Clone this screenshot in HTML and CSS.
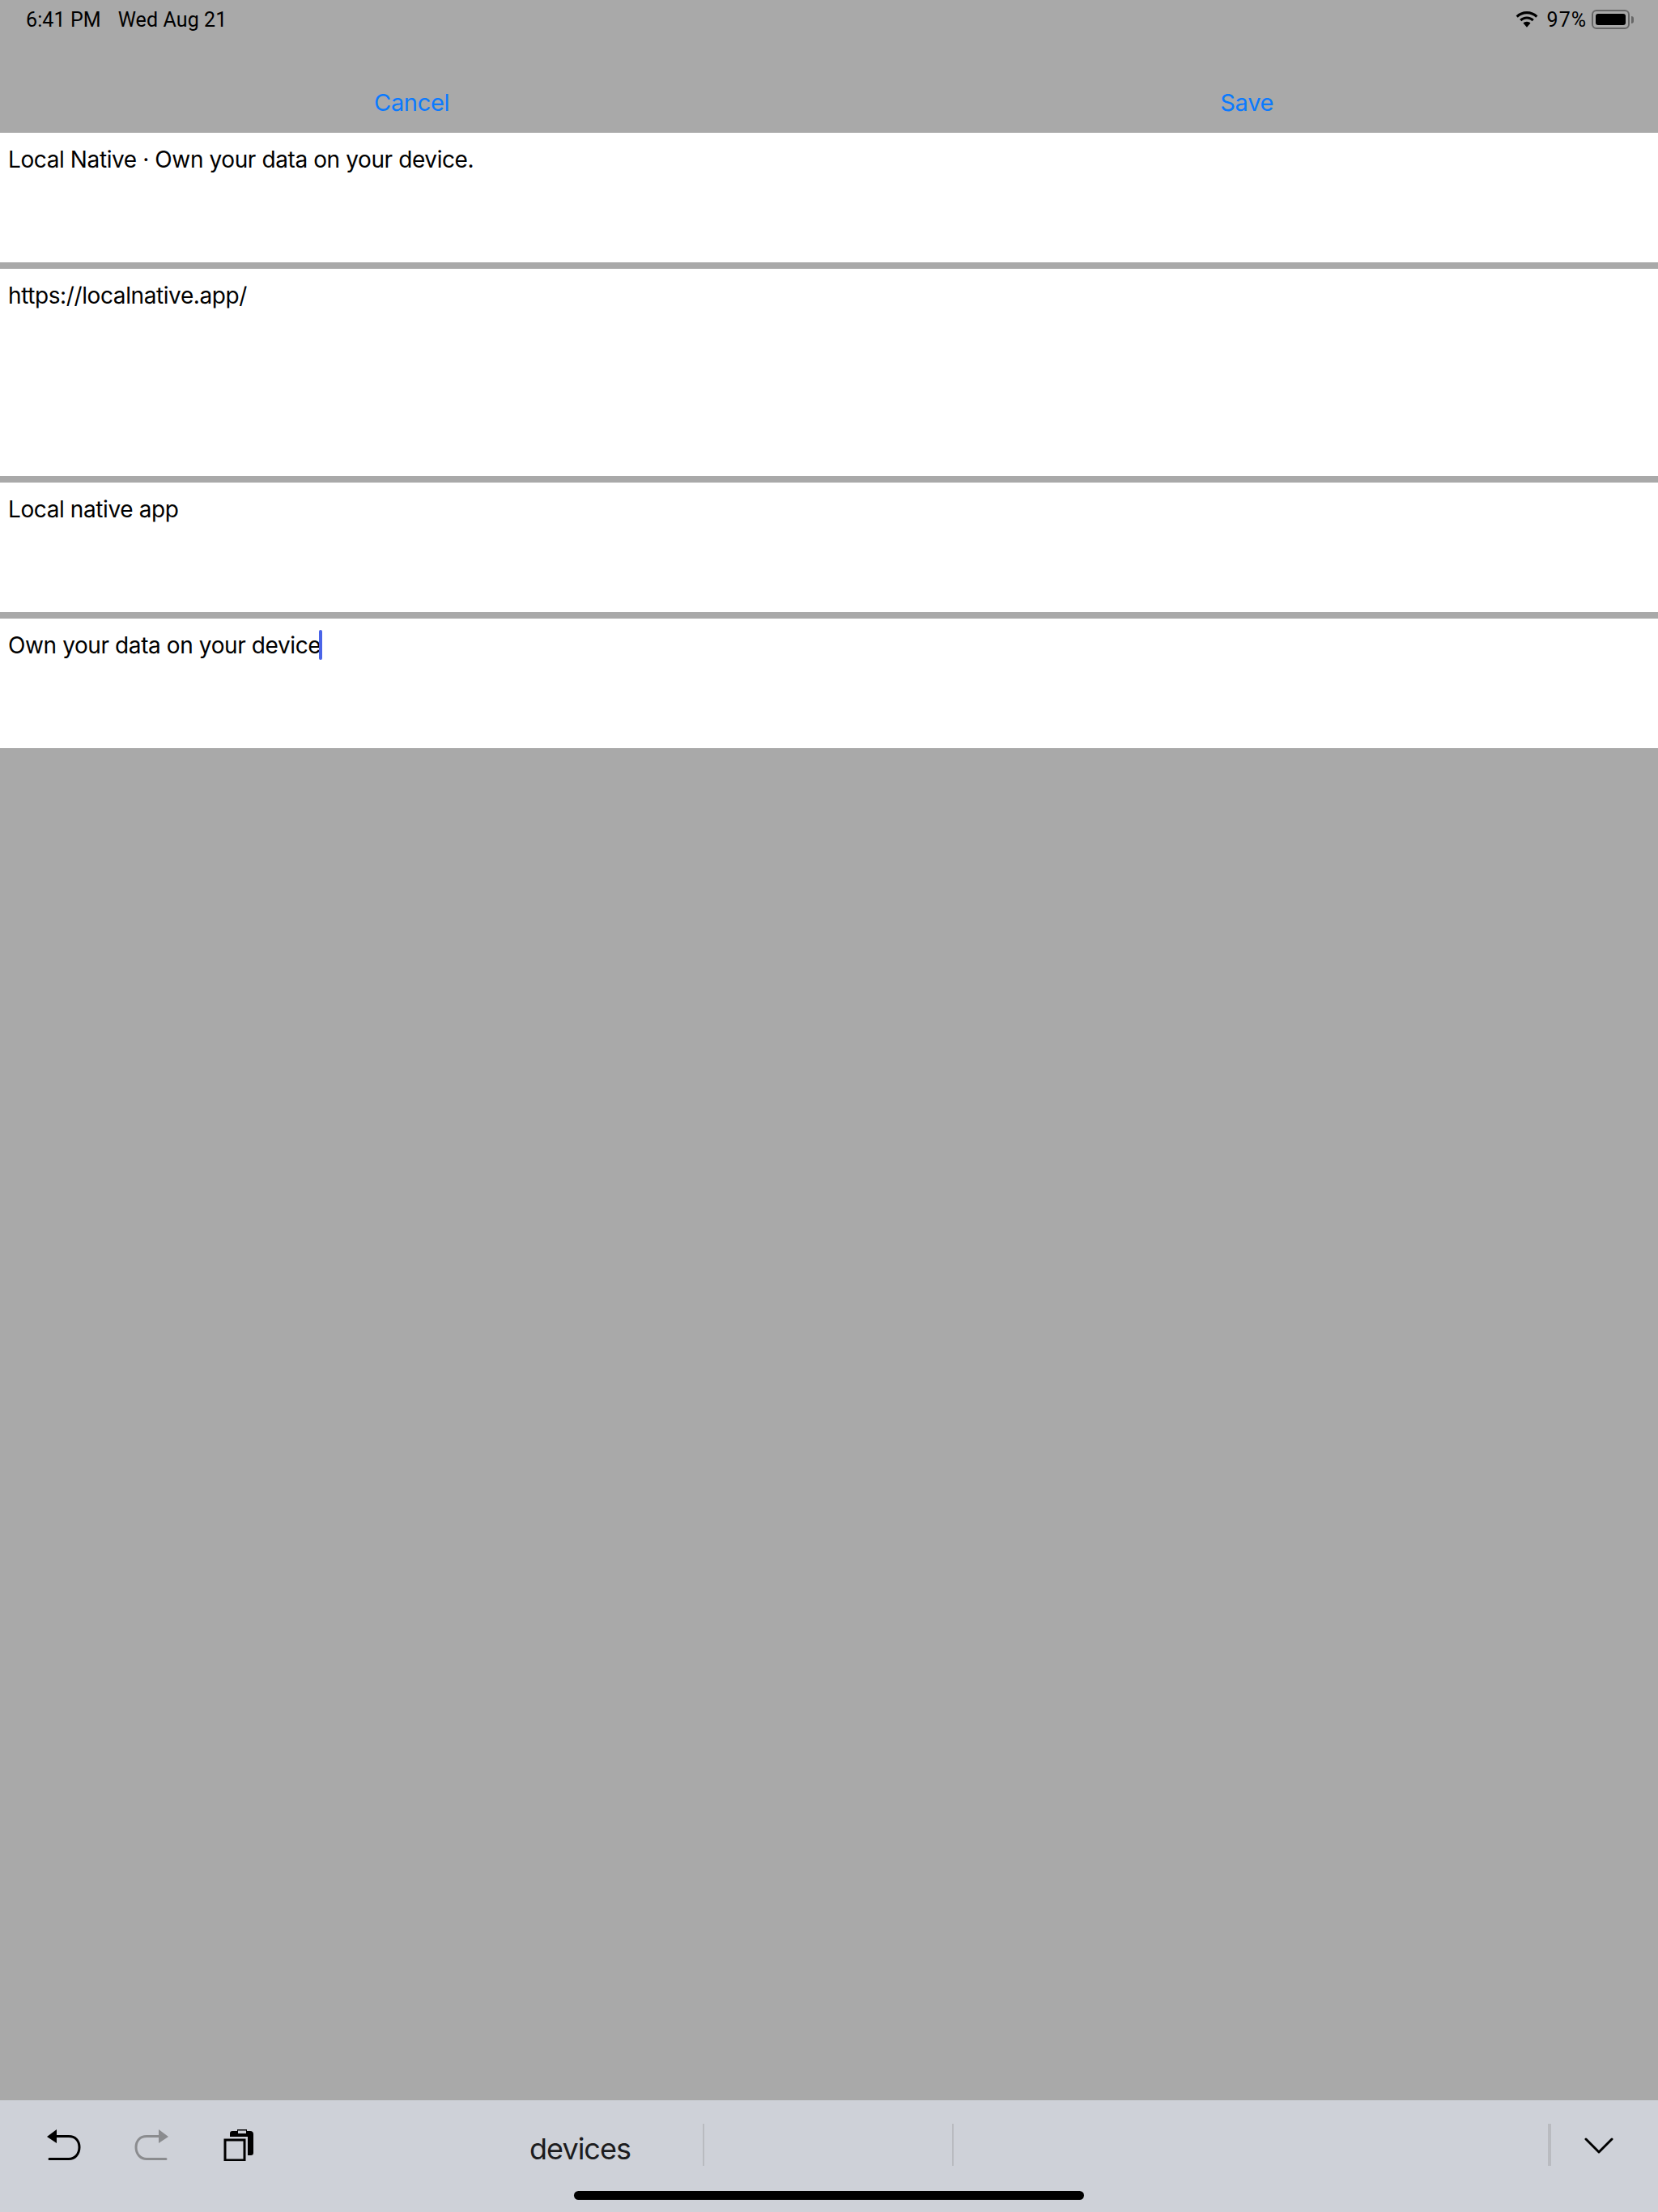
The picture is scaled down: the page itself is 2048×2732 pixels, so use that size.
FILE: index.html
```html
<!DOCTYPE html>
<html lang="en">
<head>
    <meta charset="UTF-8">
    <meta name="viewport" content="width=device-width, initial-scale=1.0">
    <title>Local Native</title>
    <link rel="stylesheet" href="styles.css">
</head>
<body>
    <div class="screen">
        <div class="status-bar">
            <span class="status-time">6:41 PM</span>
            <span class="status-date">Wed Aug 21</span>
            <div class="status-right">
                <svg class="wifi-icon" width="28" height="20" viewBox="0 0 28 20">
                    <path d="M14 0C8.8 0 4.2 2 .6 5.4l2.2 2.3C5.7 4.9 9.6 3.2 14 3.2s8.300 1.700 11.200 4.500l2.200-2.300C23.800 2 19.200 0 14 0z"/>
                    <path d="M14 6.400c-3.400 0-6.500 1.300-8.800 3.500l2.300 2.300c1.700-1.600 4-2.600 6.500-2.600s4.800 1 6.500 2.600l2.300-2.300C20.500 7.700 17.400 6.400 14 6.400z"/>
                    <path d="M14 12.800c-1.900 0-3.400.7-4.500 1.700l4.500 5.300 4.500-5.300c-1.100-1-2.600-1.700-4.500-1.700z"/>
                </svg>
                <span class="status-battery-text">97%</span>
                <div class="battery">
                    <div class="battery-level"></div>
                </div>
                <div class="battery-nub"></div>
            </div>
        </div>

        <div class="nav-bar">
            <span class="nav-btn">Cancel</span>
            <span class="nav-btn">Save</span>
        </div>

        <div class="field field-short">Local Native · Own your data on your device.</div>
        <div class="field field-tall">https://localnative.app/</div>
        <div class="field field-short">Local native app</div>
        <div class="field field-short">Own your data on your device<span class="caret"></span></div>

        <div class="spacer"></div>

        <div class="keyboard-bar">
            <div class="kb-tools">
                <svg class="kb-icon" width="44" height="40" viewBox="0 0 44 40">
                    <path d="M0 10 L12 1 V18 Z" fill="#000"/>
                    <path d="M10 9.500 H27 C35 9.500 40 15 40 23 C40 32 34 37.500 27 37.500 H3" fill="none" stroke="#000" stroke-width="3" stroke-linecap="round"/>
                </svg>
                <svg class="kb-icon" width="44" height="40" viewBox="0 0 44 40">
                    <path d="M42 10 L30 1 V18 Z" fill="#8b8c8f"/>
                    <path d="M32 9.500 H15 C7 9.500 2 15 2 23 C2 32 8 37.500 15 37.500 H39" fill="none" stroke="#8b8c8f" stroke-width="3" stroke-linecap="round"/>
                </svg>
                <svg class="kb-icon" width="38" height="40" viewBox="0 0 38 40">
                    <path d="M8 12 V6 Q8 3 11 3 H17 V1 H29 V3 H33 Q37 3 37 7 V30 Q37 33 34 33 H30 V10 H8 Z" fill="#000"/>
                    <rect x="18" y="2.500" width="10" height="3.500" fill="#ced1d8"/>
                    <rect x="2" y="14" width="24" height="25" fill="#ced1d8" stroke="#000" stroke-width="3"/>
                </svg>
            </div>
            <div class="kb-cell kb-cell-word">devices</div>
            <div class="kb-cell"></div>
            <div class="kb-cell kb-cell-wide"></div>
            <svg class="kb-chevron" width="36" height="20" viewBox="0 0 36 20">
                <path d="M2 2 L18 18 L34 2" fill="none" stroke="#000" stroke-width="3" stroke-linecap="round" stroke-linejoin="round"/>
            </svg>
            <div class="home-indicator"></div>
        </div>
    </div>
</body>
</html>
```

FILE: styles.css
```css
* {
    margin: 0;
    padding: 0;
    box-sizing: border-box;
}

body {
    width: 2048px;
    height: 2732px;
    background-color: #a9a9a9;
    font-family: Inter, "Liberation Sans", sans-serif;
    color: #000;
    overflow: hidden;
}

.screen {
    display: flex;
    flex-direction: column;
    height: 2732px;
}

.status-bar {
    display: flex;
    align-items: center;
    height: 48px;
    padding-left: 32px;
    font-family: Roboto, sans-serif;
    font-size: 25px;
    letter-spacing: 0.1px;
}

.status-date {
    margin-left: 21px;
}

.status-right {
    display: flex;
    align-items: center;
    margin-left: auto;
    padding-right: 30px;
}

.wifi-icon {
    margin-right: 11px;
}

.status-battery-text {
    letter-spacing: 1px;
}

.battery {
    width: 47px;
    height: 24px;
    margin-left: 6px;
    padding: 3px;
    border: 2px solid #666;
    border-radius: 6px;
}

.battery-level {
    width: 100%;
    height: 100%;
    background-color: #000;
    border-radius: 3px;
}

.battery-nub {
    width: 3px;
    height: 9px;
    margin-left: 2px;
    background-color: #666;
    border-radius: 0 3px 3px 0;
}

.nav-bar {
    display: flex;
    gap: 952px;
    height: 116px;
    padding: 61px 0 0 462px;
    font-size: 29px;
    line-height: 36px;
    letter-spacing: -0.3px;
    color: #0a7aff;
}

.field {
    margin-bottom: 8px;
    padding: 16px 10px 0;
    background-color: #fff;
    font-size: 28px;
    line-height: 34px;
    letter-spacing: -0.4px;
}

.field-short {
    height: 160px;
}

.field-tall {
    height: 256px;
}

.caret {
    display: inline-block;
    width: 4px;
    height: 37px;
    margin: -8px 0 -8px -2px;
    background-color: #4a64e8;
    border-radius: 2px;
}

.spacer {
    flex: 1;
}

.keyboard-bar {
    position: relative;
    display: flex;
    align-items: flex-start;
    height: 138px;
    padding-top: 29px;
    background-color: #ced1d8;
}

.kb-tools {
    display: flex;
    align-items: center;
    gap: 64px;
    width: 560px;
    height: 52px;
    padding-left: 58px;
}

.kb-tools .kb-icon:last-child {
    margin-left: 2px;
}

.kb-cell {
    display: flex;
    align-items: center;
    justify-content: center;
    width: 308px;
    height: 52px;
    border-right: 2px solid #b9bbc0;
    font-size: 36px;
    letter-spacing: -1px;
    color: #1c1c1e;
}

.kb-cell-word {
    width: 310px;
    padding: 10px 0 0 5px;
}

.kb-cell-wide {
    width: 738px;
    border-right-width: 4px;
}

.kb-chevron {
    margin: 17px 0 0 41px;
}

.home-indicator {
    position: absolute;
    left: 709px;
    bottom: 15px;
    width: 630px;
    height: 11px;
    background-color: #000;
    border-radius: 6px;
}
```
